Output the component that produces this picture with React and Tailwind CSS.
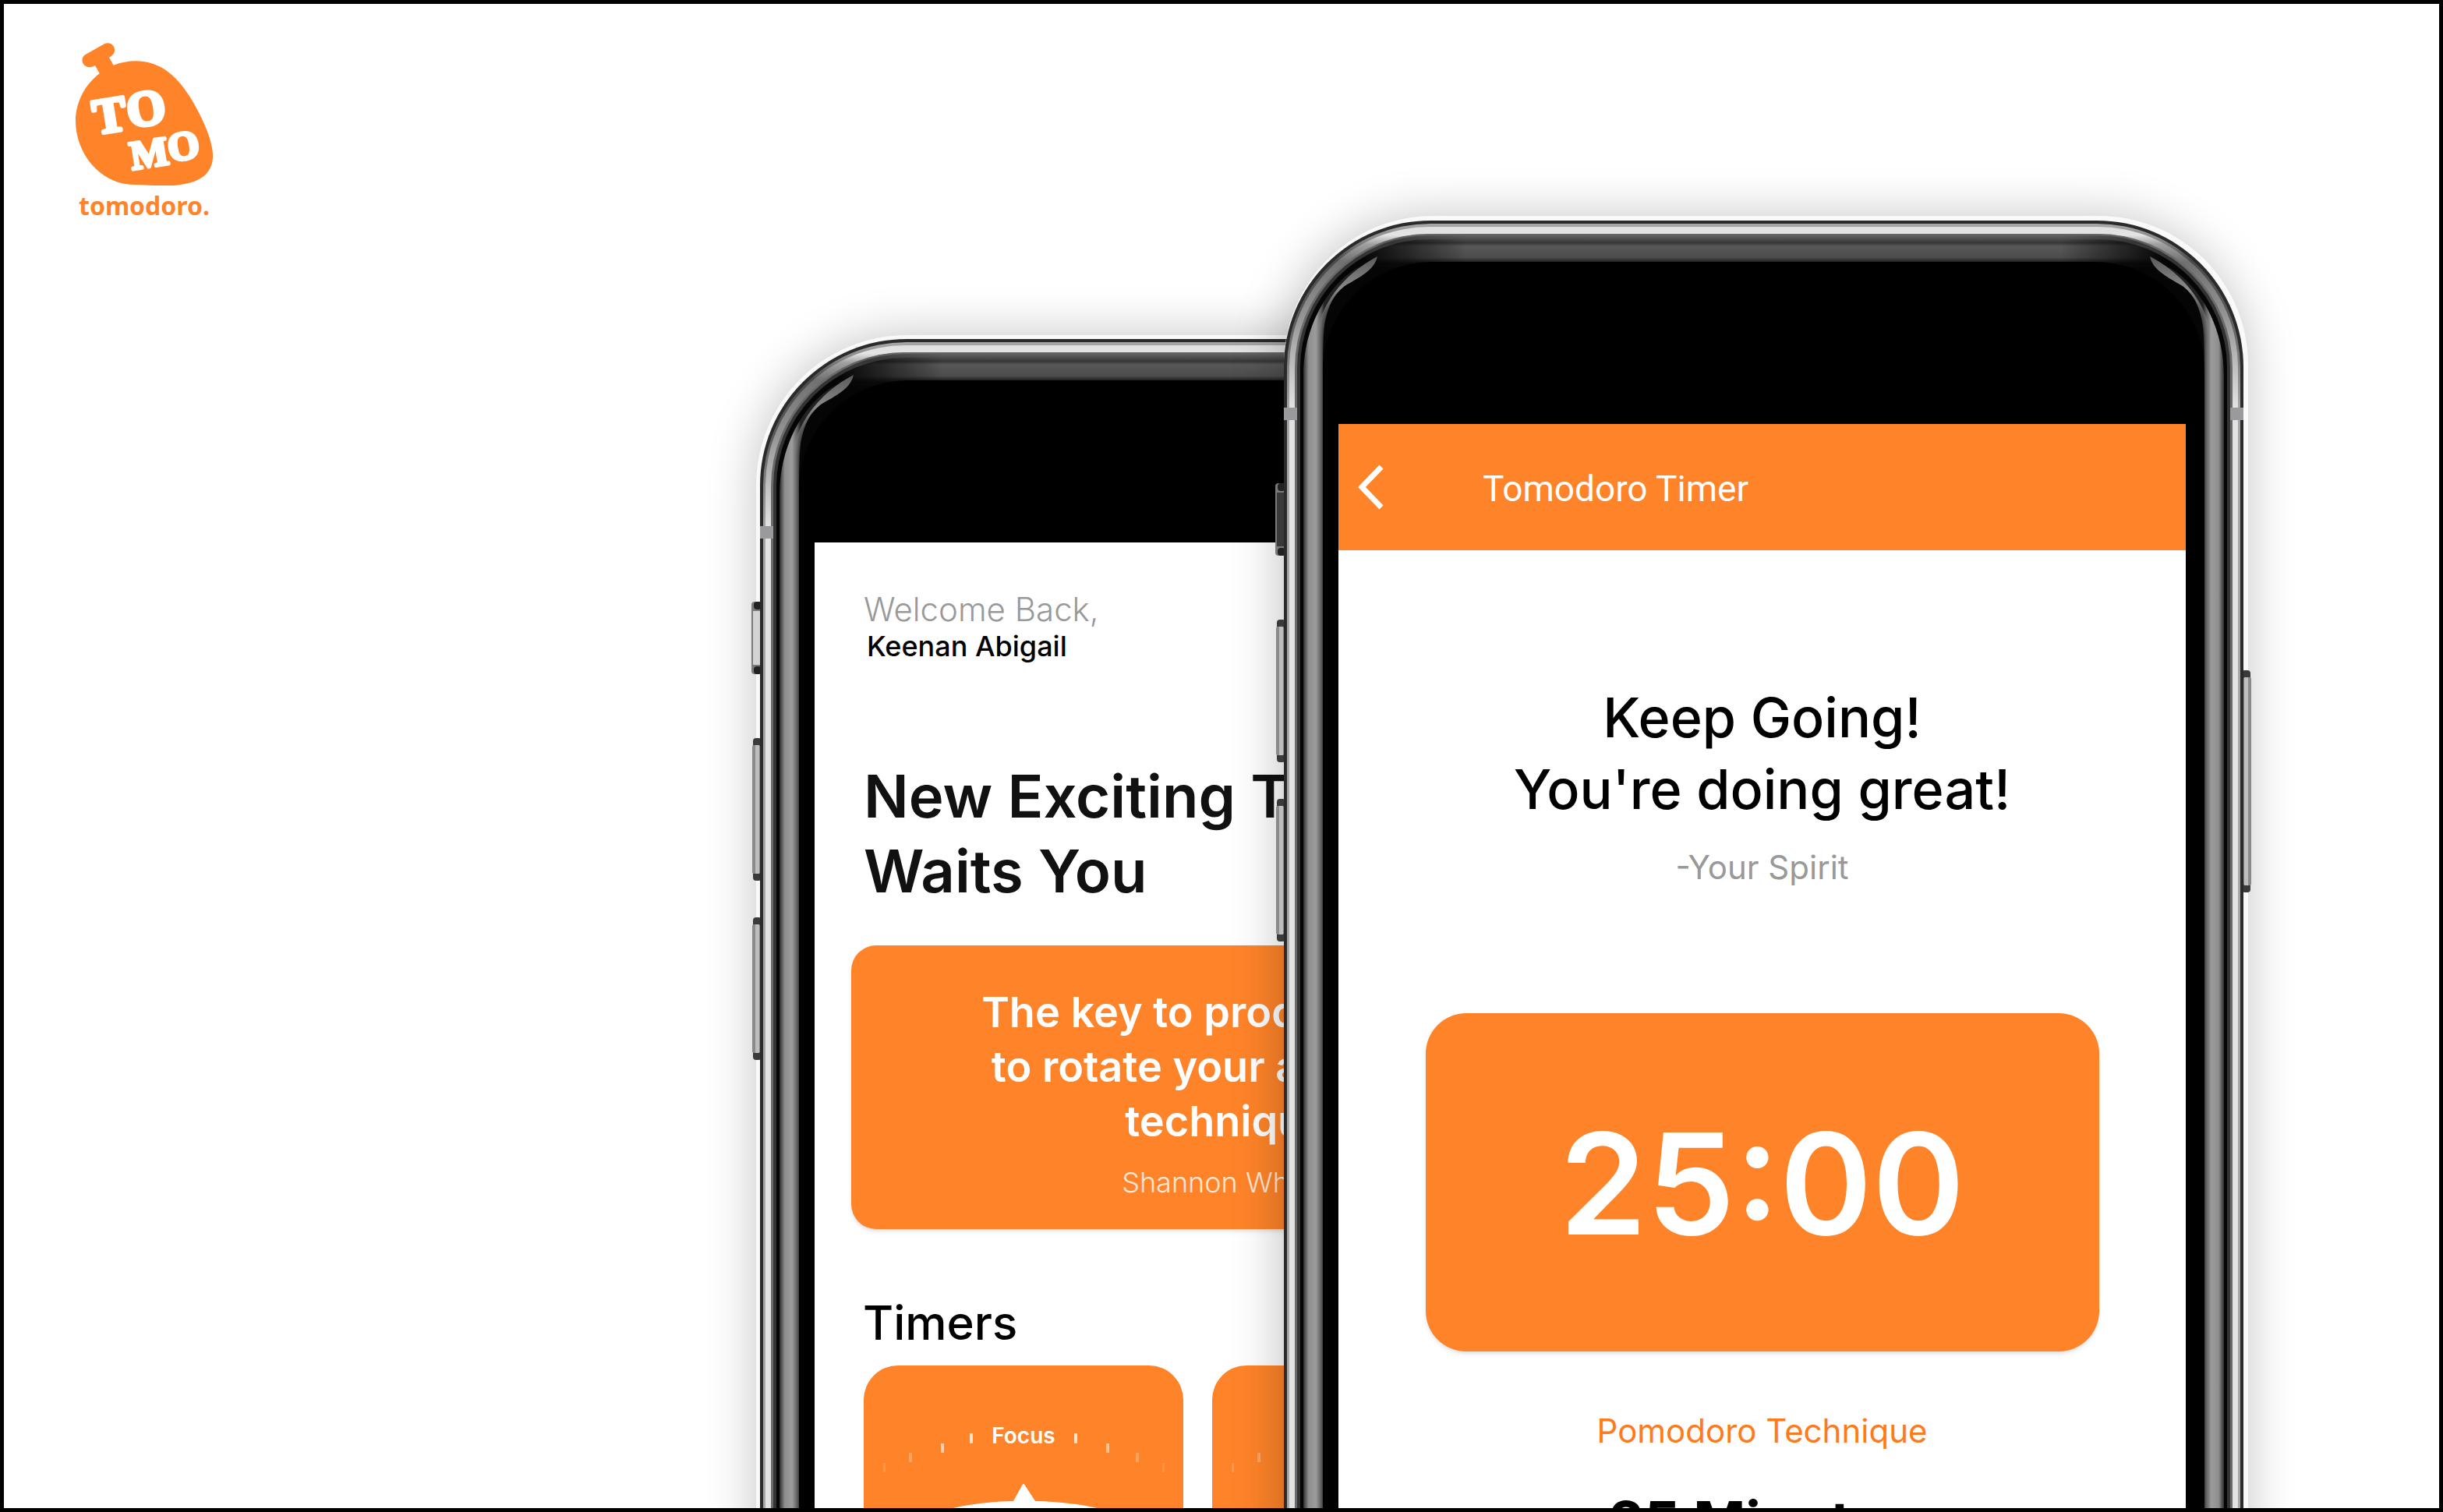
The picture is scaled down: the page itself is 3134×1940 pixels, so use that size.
const FRAME_W = 1231;
const FRAME_H = 2400;

function HalfRail({ id }) {
  return (
    <g>
      <path
        d="M25 2400V200C25 130 62 76 100 58C80 72 66 88 56 110C51 130 50 160 50 200V2400Z"
        fill={`url(#${id}-rail)`}
      />
      <path d="M40 150C48 108 74 70 120 46C116 64 98 72 78 84C60 98 54 116 50 150Z" fill={`url(#${id}-glint)`} />
    </g>
  );
}

function SideButton({ y, h, w = 9 }) {
  return (
    <g>
      <rect x={-w} y={y} width={w + 2} height={h} rx="4" fill="#3a3a3a" />
      <rect x={-w - 1} y={y + 9} width={w + 1} height={h - 18} rx="2" fill="#8a8a8a" />
      <rect x={-w + 3} y={y + 9} width={w - 4} height={h - 18} fill="#bdbdbd" />
    </g>
  );
}

function MuteSwitch({ y, h, face }) {
  return (
    <g>
      <rect x="-11" y={y} width="13" height={h} rx="4" fill="#7a7a7a" />
      <rect x="-8" y={y} width="10" height="10" rx="4" fill="#222" />
      <rect x="-8" y={y + h - 10} width="10" height="10" rx="4" fill="#222" />
      <rect x="-9" y={y + 12} width="9" height={h - 24} fill={face} />
    </g>
  );
}

function PhoneFrame({ id, switchFace }) {
  return (
    <svg
      aria-hidden="true"
      className="absolute inset-0 h-full w-full overflow-visible"
      viewBox={`0 0 ${FRAME_W} ${FRAME_H}`}
    >
      <defs>
        <linearGradient id={`${id}-rail`} gradientUnits="userSpaceOnUse" x1="25" x2="52" y1="0" y2="0">
          <stop offset="0" stopColor="#2e2e2e" />
          <stop offset="0.25" stopColor="#8e8e8e" />
          <stop offset="0.6" stopColor="#9c9c9c" />
          <stop offset="0.85" stopColor="#5c5c5c" />
          <stop offset="1" stopColor="#222" />
        </linearGradient>
        <linearGradient id={`${id}-glint`} gradientUnits="userSpaceOnUse" x1="0" x2="0" y1="46" y2="150">
          <stop offset="0" stopColor="#5a5a5a" />
          <stop offset="0.4" stopColor="#8a8a8a" />
          <stop offset="1" stopColor="#8a8a8a" stopOpacity="0" />
        </linearGradient>
        <linearGradient id={`${id}-edge`} gradientUnits="userSpaceOnUse" x1="0" x2="0" y1="4" y2="240">
          <stop offset="0" stopColor="#a8a8a8" />
          <stop offset="0.08" stopColor="#8a8a8a" />
          <stop offset="0.2" stopColor="#4a4a4a" />
          <stop offset="0.5" stopColor="#5a5a5a" />
          <stop offset="1" stopColor="#a6a6a6" />
        </linearGradient>
        <linearGradient id={`${id}-shine`} gradientUnits="userSpaceOnUse" x1="0" x2="0" y1="7" y2="240">
          <stop offset="0" stopColor="#dedede" />
          <stop offset="0.05" stopColor="#e4e4e4" />
          <stop offset="0.1" stopColor="#a0a0a0" />
          <stop offset="0.2" stopColor="#707070" />
          <stop offset="0.5" stopColor="#959595" />
          <stop offset="1" stopColor="#e2e2e2" />
        </linearGradient>
        <linearGradient id={`${id}-top`} gradientUnits="userSpaceOnUse" x1="0" x2="0" y1="17" y2="55">
          <stop offset="0" stopColor="#6a6a6a" />
          <stop offset="0.2" stopColor="#4a4a4a" />
          <stop offset="0.3" stopColor="#363636" />
          <stop offset="0.42" stopColor="#585858" />
          <stop offset="0.8" stopColor="#4c4c4c" />
          <stop offset="1" stopColor="#111" />
        </linearGradient>
        <linearGradient id={`${id}-fade`} gradientUnits="userSpaceOnUse" x1="0" x2={FRAME_W} y1="0" y2="0">
          <stop offset="0.08" stopColor="#000" />
          <stop offset="0.19" stopColor="#fff" />
          <stop offset="0.81" stopColor="#fff" />
          <stop offset="0.92" stopColor="#000" />
        </linearGradient>
        <mask id={`${id}-mask`} maskUnits="userSpaceOnUse" x="0" y="0" width={FRAME_W} height="60">
          <rect width={FRAME_W} height="60" fill={`url(#${id}-fade)`} />
        </mask>
      </defs>
      <MuteSwitch y={337} h={93} face={switchFace} />
      <SideButton y={512} h={183} />
      <SideButton y={742} h={183} />
      <g transform={`translate(${FRAME_W} 0) scale(-1 1)`}>
        <SideButton y={577} h={285} />
      </g>
      <rect width={FRAME_W} height={FRAME_H} rx="188" fill="#2a2a2a" />
      <rect x="4" y="4" width={FRAME_W - 8} height={FRAME_H - 8} rx="184" fill={`url(#${id}-edge)`} />
      <rect x="7" y="8" width={FRAME_W - 14} height={FRAME_H - 16} rx="180" fill={`url(#${id}-shine)`} />
      <rect x="14" y="17" width={FRAME_W - 28} height={FRAME_H - 34} rx="172" fill="#6a6a6a" />
      <rect x="17" y="19" width={FRAME_W - 34} height={FRAME_H - 38} rx="170" fill="#333" />
      <rect x="21" y="24" width={FRAME_W - 42} height={FRAME_H - 48} rx="165" fill="#050505" />
      <rect
        x="16"
        y="17"
        width={FRAME_W - 32}
        height={FRAME_H - 34}
        rx="171"
        fill={`url(#${id}-top)`}
        mask={`url(#${id}-mask)`}
      />
      <rect x="50" y="53" width={FRAME_W - 100} height={FRAME_H - 106} rx="140" fill="#000" />
      <HalfRail id={id} />
      <g transform={`translate(${FRAME_W} 0) scale(-1 1)`}>
        <HalfRail id={id} />
      </g>
      <rect x="0" y="240" width="17" height="16" fill="#9a9a9c" />
      <rect x={FRAME_W - 17} y="240" width="17" height="16" fill="#9a9a9c" />
    </svg>
  );
}

function Phone({ id, switchFace, className, children }) {
  return (
    <section
      className={`relative flex h-[2400px] w-[1231px] shrink-0 flex-col rounded-[188px] pt-[261px] pr-[74px] pb-[200px] pl-[70px] ${className}`}
    >
      <PhoneFrame id={id} switchFace={switchFace} />
      <div className="relative flex grow flex-col bg-white">{children}</div>
    </section>
  );
}

function Logo() {
  return (
    <a href="#" aria-label="tomodoro." className="flex w-[176px] flex-col items-center text-[#ff8429]">
      <svg viewBox="111 74 528 550" className="w-full" aria-hidden="true">
        <path
          fill="currentColor"
          d="M257 160C320 136 395 136 458 179C525 226 572 310 606 386C628 436 640 480 639 514C636 588 572 622 466 624C410 624 370 620 320 619C205 612 111 500 111 375C111 300 150 232 203 192L186 161C164 174 145 167 138 150C133 136 139 124 150 118L222 78C243 68 262 84 261 103C260 116 252 124 240 130Z"
        />
        <g
          fill="#fff"
          stroke="#fff"
          strokeLinejoin="round"
          fontWeight="700"
          textAnchor="middle"
          className="font-['Liberation_Serif',serif]"
        >
          <g strokeWidth="14" fontSize="192">
            <text transform="translate(252 416) rotate(-9)">T</text>
            <text transform="translate(392 389) rotate(-9)">O</text>
          </g>
          <g strokeWidth="12" fontSize="156">
            <text transform="translate(402 551) rotate(-9)">M</text>
            <text transform="translate(534 522) rotate(-9)">O</text>
          </g>
        </g>
      </svg>
      <span className="font-['Noto_Sans','Open_Sans',sans-serif] text-[32px] leading-[52px] font-bold">tomodoro.</span>
    </a>
  );
}

function TimerCard({ label }) {
  return (
    <article className="flex h-[410px] w-[410px] shrink-0 flex-col items-center rounded-[44px] bg-[#ff8429] pt-[70px] text-white">
      <h3 className="text-[28px] leading-[40px] font-semibold">{label}</h3>
      <svg viewBox="0 0 410 300" className="-mt-[40px] w-full" aria-hidden="true">
        <g fill="#fff">
          <rect x="136" y="17" width="4" height="13" opacity="0.75" />
          <rect x="270" y="17" width="4" height="13" opacity="0.75" />
          <rect x="99" y="30" width="4" height="12" opacity="0.6" />
          <rect x="311" y="30" width="4" height="12" opacity="0.5" />
          <rect x="58" y="42" width="4" height="12" opacity="0.25" />
          <rect x="349" y="42" width="4" height="12" opacity="0.25" />
          <rect x="25" y="55" width="3" height="12" opacity="0.15" />
          <rect x="383" y="55" width="3" height="12" opacity="0.12" />
          <path d="M192 104L203 84Q205 80 207 84L220 104C262 105 296 110 330 122V300H85V122C118 110 150 105 192 104Z" />
        </g>
      </svg>
    </article>
  );
}

export default function App() {
  return (
    <main className="flex h-screen items-start overflow-hidden border-5 border-black bg-white font-['Inter',sans-serif] text-black">
      <header className="grow pt-[50px] pl-[92px]">
        <Logo />
      </header>

      <div className="flex shrink-0 items-start pr-[251px]">
        <Phone
          id="home"
          switchFace="#d4d4d4"
          className="mt-[430px] shadow-[0_0_0_5px_rgba(255,255,255,0.8),0_0_60px_8px_rgba(0,0,0,0.22)]"
        >
          <div className="px-[63px] pt-[62px]">
            <p className="text-[42px] leading-[48px] font-light text-[#999]">Welcome Back,</p>
            <p className="pl-1 text-[36px] leading-[46px] font-medium">Keenan Abigail</p>
            <h1 className="mt-[121px] text-[76px] leading-[96px] font-semibold text-[#111]">
              New Exciting Task
              <br />
              Waits You
            </h1>
          </div>
          <blockquote className="mx-[47px] mt-[48px] flex h-[364px] flex-col items-center rounded-[32px] bg-[#ff8429] pt-[51px] text-center text-white shadow-md">
            <p className="text-[54px] leading-[70px] font-semibold">
              The key to productivity is
              <br />
              to rotate your avoidance
              <br />
              techniques
            </p>
            <cite className="mt-5 text-[36px] leading-[46px] font-light text-white/80 not-italic">Shannon Wheeler</cite>
          </blockquote>
          <h2 className="mt-[84px] px-[62px] text-[60px] leading-[72px] font-medium">Timers</h2>
          <div className="mt-[19px] flex gap-[37px] overflow-hidden pl-[63px]">
            <TimerCard label="Focus" />
            <TimerCard label="Break" />
          </div>
        </Phone>

        <Phone
          id="timer"
          switchFace="#3a3a3a"
          className="-ml-[559px] mt-[278px] shadow-[3px_-3px_0_3px_rgba(255,255,255,0.8),0_0_60px_8px_rgba(0,0,0,0.22)]"
        >
          <header className="flex h-[162px] items-center gap-[127px] bg-[#ff8429] pl-6 text-white">
            <button type="button" aria-label="Back">
              <svg viewBox="0 0 34 58" className="w-[34px]" fill="none" stroke="currentColor" strokeWidth="7" aria-hidden="true">
                <path d="M31 3L6 29L31 55" />
              </svg>
            </button>
            <h2 className="pt-1 font-['Roboto',sans-serif] text-[46px] leading-[56px]">Tomodoro Timer</h2>
          </header>
          <div className="flex flex-col items-center text-center">
            <p className="mt-[169px] text-[70px] leading-[92px] font-medium">
              Keep Going!
              <br />
              You're doing great!
            </p>
            <p className="mt-6 text-[42px] leading-[60px] text-[#999]">-Your Spirit</p>
            <div className="mt-[157px] flex h-[434px] w-[864px] items-center justify-center rounded-[52px] bg-[#ff8429] pt-1 text-white shadow-md">
              <time className="text-[180px] leading-[200px] font-semibold">25:00</time>
            </div>
            <p className="mt-[72px] text-[42px] leading-[60px] text-[#ff7a1a]">Pomodoro Technique</p>
            <p className="mt-[40px] text-[72px] leading-[92px] font-bold">25 Minutes</p>
          </div>
        </Phone>
      </div>
    </main>
  );
}
